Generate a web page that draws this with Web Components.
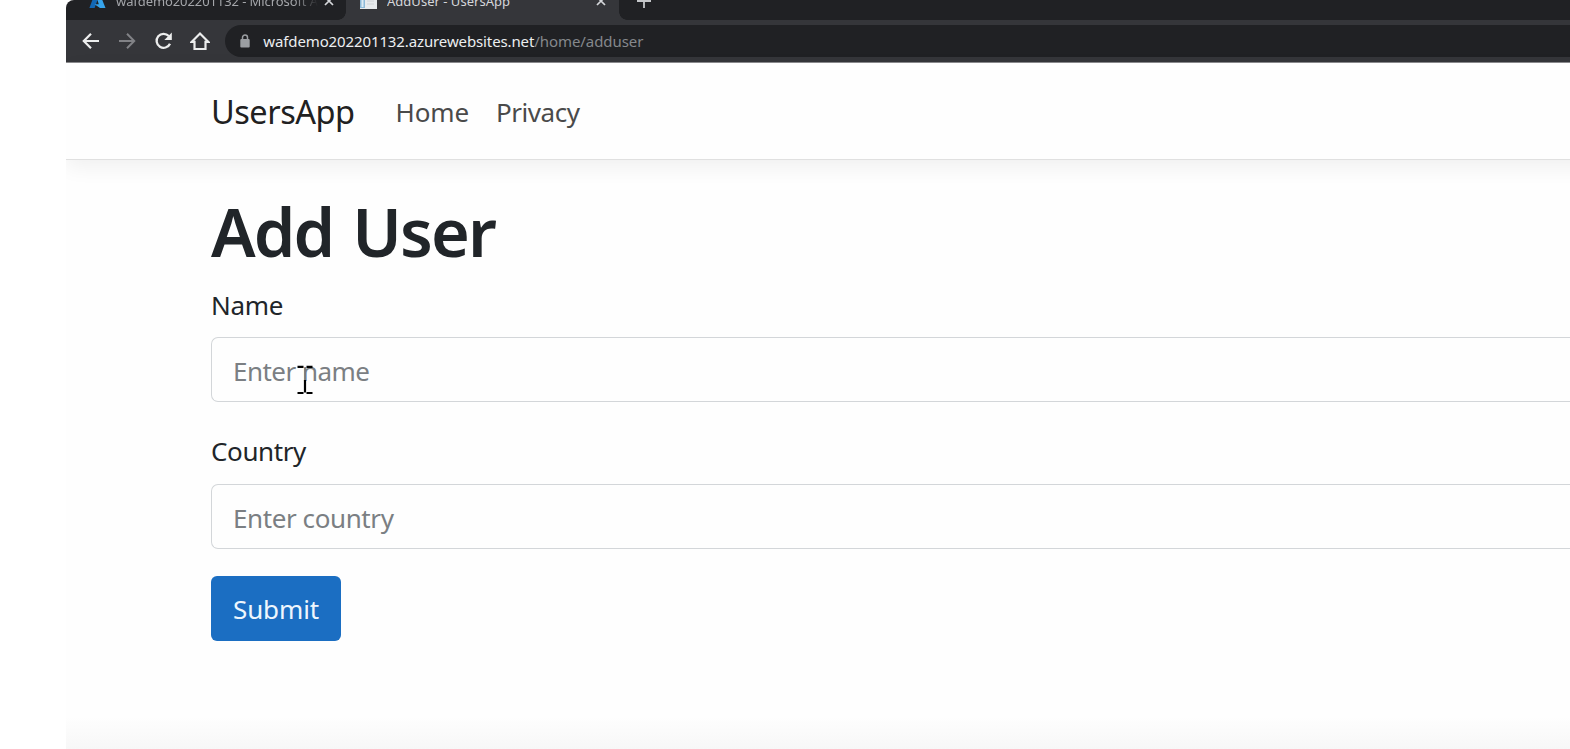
<!DOCTYPE html>
<html lang="en">
<head>
<meta charset="utf-8">
<title>AddUser - UsersApp</title>
<style>
html,body{margin:0;height:100%;overflow:hidden;background:#fff}
body{font-family:"Noto Sans","Open Sans",sans-serif}
</style>
</head>
<body>
<app-window></app-window>
<script>
const define = (name, html, after) => customElements.define(name, class extends HTMLElement {
  connectedCallback() {
    if (this.shadowRoot) return;
    const t = document.createElement('template');
    t.innerHTML = html;
    this.attachShadow({mode: 'open'}).append(t.content.cloneNode(true));
    if (after) after(this);
  }
});

/* A line of text whose tracking is set so that it fills the given width. */
define('fit-text', `<style>:host{display:block;white-space:pre;flex:none}span{display:inline-block}</style><span><slot></slot></span>`, el => {
  const span = el.shadowRoot.querySelector('span');
  const want = +el.getAttribute('width');
  el.style.width = want + 'px';
  span.style.letterSpacing = (want - span.getBoundingClientRect().width) / el.textContent.length + 'px';
});

define('browser-tab', `<style>
:host{display:flex;align-items:center;height:38px;box-sizing:border-box;flex:none;font-size:13px;line-height:18px;color:#a4a6aa}
:host([active]){background:#35363a;color:#d5d7da;border-radius:8px 8px 0 0}
.label{flex:1;overflow:hidden}
:host([fade]) .label{-webkit-mask:linear-gradient(90deg,#000 178px,transparent 202px)}
slot[name=icon]{display:block}
svg{display:block}
</style><slot name="icon"></slot><div class="label"><slot></slot></div>
<svg width="10" height="10" viewBox="0 0 10 10"><path d="M1 1l8 8M9 1l-8 8" stroke="#d5d7da" stroke-width="1.7"/></svg>`);

define('tab-strip', `<style>
:host{display:flex;height:20px;background:#202124;align-items:flex-end}
.strip{display:flex;align-items:flex-end;height:38px}
.one{width:280px;padding:0 12px 0 23px}
.two{width:273px;padding:0 13px 0 13px}
svg{display:block}
.one svg{margin-right:10px}.two svg{margin-right:9px}
.foot{width:8px;height:8px;flex:none}
.l{margin-left:-8px;background:radial-gradient(circle at 0 0,transparent 7.5px,#35363a 8px)}
.r{background:radial-gradient(circle at 100% 0,transparent 7.5px,#35363a 8px)}
.plus{margin:0 0 12px 10px}
</style><div class="strip">
<browser-tab class="one" fade><svg slot="icon" width="17" height="17" viewBox="0 0 17 17"><path d="M5.600 1h5L5.600 15H.4z" fill="#1267b4"/><path d="M6.500 1h4.400l5.600 14h-5.500L5.500 11.200h4.300z" fill="#36a3ea"/></svg><fit-text width="202">wafdemo202201132 - Microsoft A</fit-text></browser-tab>
<i class="foot l"></i>
<browser-tab class="two" active><svg slot="icon" width="19" height="18" viewBox="0 0 19 18"><path d="M1 0h12l5 5v12H1z" fill="#e7eaed"/><path d="M1 1h5v15H1z" fill="#8cb9d8"/><path d="M2.500 2h2v13h-2z" fill="#dceaf4"/><path d="M8 9h7M8 12h7" stroke="#d0d4d8"/></svg><fit-text width="123">AddUser - UsersApp</fit-text></browser-tab>
<i class="foot r"></i>
<svg class="plus" width="14" height="14" viewBox="0 0 14 14"><path d="M7 0v14M0 7h14" stroke="#c4c6c9" stroke-width="1.8"/></svg>
</div>`);

define('tool-bar', `<style>
:host{display:flex;height:43px;box-sizing:border-box;background:#35363a;border-bottom:1px solid #8b8b8e;align-items:center;padding:0 0 0 15px;gap:16.200px}
svg{display:block;flex:none}
.omni{flex:1;height:32px;margin-left:-1px;background:#202124;border-radius:16px 0 0 16px;display:flex;align-items:center;padding-left:15px;font-size:15px;line-height:20px;color:#eceef0}
.omni svg{margin-right:13.500px}
.path{color:#85888c}
</style>
<svg width="20" height="20" viewBox="0 0 20 20"><path d="M18 10H3M10 2.800L2.800 10l7.200 7.200" fill="none" stroke="#eceded" stroke-width="2.200"/></svg>
<svg width="20" height="20" viewBox="0 0 20 20"><path d="M2 10h15M10 2.800l7.200 7.200-7.200 7.200" fill="none" stroke="#818286" stroke-width="2"/></svg>
<svg width="20" height="20" viewBox="-.8 0 20 20"><path d="M16.200 12.700A7 7 0 1 1 15 5.100" fill="none" stroke="#eceded" stroke-width="2.300"/><path d="M18 1.500v7.500h-7.500z" fill="#eceded"/></svg>
<svg width="20" height="20" viewBox="0 0 20 20"><path d="M1.800 10.800L10 2.500l8.200 8.300h-2.700v7.200h-11v-7.200z" fill="none" stroke="#eceded" stroke-width="2.200"/></svg>
<div class="omni"><svg width="10" height="14" viewBox="0 0 10 14"><path d="M2.500 6V3.600a2.500 2.500 0 0 1 5 0V6" fill="none" stroke="#9b9ea2" stroke-width="1.500"/><rect x=".3" y="5" width="9.400" height="8.500" rx="1" fill="#9b9ea2"/></svg><fit-text width="271">wafdemo202201132.azurewebsites.net</fit-text><fit-text class="path" width="109">/home/adduser</fit-text></div>`);

define('nav-bar', `<style>
:host{display:flex;height:97px;box-sizing:border-box;align-items:center;margin-right:-40px;padding:2px 0 0 145px;background:#fefefe;border-bottom:1px solid #e0e0e0;box-shadow:0 7px 20px rgba(0,0,0,.06);color:#212121;font-size:32.500px;line-height:48px;position:relative}
.link{font-size:26px;color:#4a4a4a}
.home{margin-left:41px}.priv{margin-left:27px}
</style><fit-text width="143.500">UsersApp</fit-text><fit-text class="link home" width="73.500">Home</fit-text><fit-text class="link priv" width="83.500">Privacy</fit-text>`);

define('form-field', `<style>
:host{display:block}
.label{font-size:26px;line-height:40px;color:#212529}
.box{height:65px;box-sizing:border-box;margin-top:var(--gap,12px);border:1px solid #d3d6d9;border-right:0;border-radius:7px 0 0 7px;background:#fefefe;padding:2px 0 0 21px;display:flex;align-items:center;font-size:26px;line-height:40px;color:#7b7f83}
</style><div class="label"><slot name="label"></slot></div><div class="box"><slot></slot></div>`);

define('submit-button', `<style>
:host{display:flex;width:130px;height:65px;align-items:center;justify-content:center;background:#1b6ec2;border-radius:6px;color:#eef6fd;font-size:26px;line-height:40px;box-sizing:border-box;padding:1px 0 0 0}
</style><slot></slot>`);

define('ibeam-cursor', `<style>:host{display:block;position:absolute;left:231px;top:302px}svg{display:block}</style>
<svg width="17" height="30" viewBox="0 0 17 30"><path d="M.5 1.800h6M9.500 1.800h6M.5 28h6M9.500 28h6M8 15v12.500" fill="none" stroke="#000" stroke-width="2.200"/><path d="M8 3v12" stroke="#777" stroke-width="1.500"/></svg>`);

define('user-page', `<style>
:host{display:block;flex:1;background:linear-gradient(#fefefe calc(100% - 32px),#f7f7f7);position:relative}
main{padding:31px 0 0 145px}
.title{font-size:66.500px;font-weight:600;line-height:80px;color:#212529;word-spacing:3.500px}
.a{margin-top:14px}.b{margin-top:29px;--gap:13px}
submit-button{margin-top:27px}
</style><nav-bar></nav-bar><main>
<fit-text class="title" width="284">Add User</fit-text>
<form-field class="a"><fit-text slot="label" width="72">Name</fit-text><fit-text width="136.500">Enter name</fit-text></form-field>
<form-field class="b"><fit-text slot="label" width="95">Country</fit-text><fit-text width="160.500">Enter country</fit-text></form-field>
<submit-button><fit-text width="86">Submit</fit-text></submit-button>
</main><ibeam-cursor></ibeam-cursor>`);

define('app-window', `<style>
:host{display:flex;flex-direction:column;height:100vh;margin-left:66px;overflow:hidden;border-top-left-radius:8px}
tab-strip,tool-bar{flex:none}
</style><tab-strip></tab-strip><tool-bar></tool-bar><user-page></user-page>`);
</script>
</body>
</html>
